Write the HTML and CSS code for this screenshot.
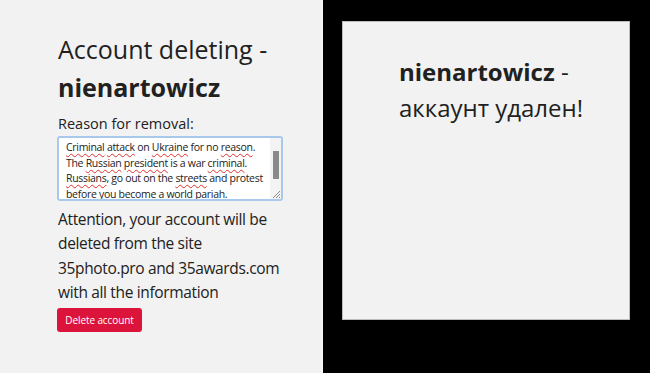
FILE: index.html
```html
<!DOCTYPE html>
<html lang="en">
<head>
  <meta charset="UTF-8">
  <title>Account deleting</title>
  <link rel="stylesheet" href="styles.css">
</head>
<body>
  <div class="page">
    <div class="left-panel">
      <h1 class="title">Account deleting - <b>nienartowicz</b></h1>
      <div class="reason-label">Reason for removal:</div>
      <div class="reason-box">
        <div class="reason-text">
          <div><span class="typo">Criminal</span> <span class="typo">attack</span> on <span class="typo">Ukraine</span> for no <span class="typo">reason</span>.</div>
          <div>The <span class="typo">Russian</span> <span class="typo">president</span> is a war <span class="typo">criminal</span>.</div>
          <div><span class="typo">Russians</span>, go out on the <span class="typo">streets</span> and protest</div>
          <div>before you <span class="typo">become</span> a world <span class="typo">pariah</span>.</div>
        </div>
        <div class="scrollbar"><div class="thumb"></div></div>
        <svg class="grip" width="9" height="9" viewBox="0 0 9 9">
          <path d="M8 1L1 8M8 4L4 8M8 7L7 8" stroke="#8a8a8a" stroke-width="1"/>
        </svg>
      </div>
      <p class="warning">Attention, your account will be deleted from the site 35photo.pro and 35awards.com with all the information</p>
      <button class="delete-btn">Delete account</button>
    </div>
    <div class="right-panel">
      <div class="result-card">
        <div class="result-text"><b>nienartowicz</b> - аккаунт удален!</div>
      </div>
    </div>
  </div>
</body>
</html>
```

FILE: styles.css
```css
body {
  margin: 0;
  font-family: "Open Sans", "Noto Sans", sans-serif;
  color: #212121;
  background: #000;
}
.page {
  display: flex;
  height: 373px;
}
.left-panel {
  width: 323px;
  background: #f2f2f2;
  border-right: 1px solid #fafafa;
  padding: 30px 0 0 58px;
  box-sizing: border-box;
}
.title {
  font-size: 25px;
  font-weight: 400;
  line-height: 38px;
  margin: 0 0 8px;
  width: 230px;
}
.title b {
  font-weight: 700;
}
.reason-label {
  font-size: 14.5px;
  line-height: 20px;
  margin-bottom: 2px;
}
.reason-box {
  position: relative;
  display: flex;
  width: 226px;
  height: 65px;
  margin-left: -1px;
  box-sizing: border-box;
  background: #fff;
  border: 2px solid #a9c9ec;
  border-radius: 3px;
}
.reason-text {
  flex: 1;
  font-size: 10.5px;
  letter-spacing: -0.3px;
  line-height: 15.5px;
  padding: 2px 0 0 7px;
  color: #222;
  white-space: nowrap;
  overflow: hidden;
}
.typo {
  text-decoration: underline wavy #e0312d;
  text-decoration-thickness: 1px;
  text-underline-offset: 2px;
}
.scrollbar {
  width: 11px;
  background: #f3f3f3;
  padding-top: 13px;
  box-sizing: border-box;
}
.thumb {
  width: 6px;
  height: 28px;
  margin: 0 auto;
  background: #8a8a8a;
}
.grip {
  position: absolute;
  right: 0;
  bottom: 0;
}
.warning {
  font-size: 15.5px;
  letter-spacing: -0.35px;
  line-height: 24.3px;
  margin: 6px 0 3px;
  width: 222px;
}
.delete-btn {
  font-family: inherit;
  font-size: 10px;
  letter-spacing: -0.1px;
  color: #fff;
  background: #dc143c;
  border: none;
  border-radius: 3px;
  width: 85px;
  height: 24px;
  padding: 0;
  margin-left: -1px;
}
.right-panel {
  flex: 1;
  padding: 21px 0 0 19px;
}
.result-card {
  width: 288px;
  height: 299px;
  box-sizing: border-box;
  background: #f2f2f2;
  border: 1px solid #bdbdbd;
  padding: 32px 0 0 56px;
}
.result-text {
  font-size: 24px;
  line-height: 36px;
}
```
